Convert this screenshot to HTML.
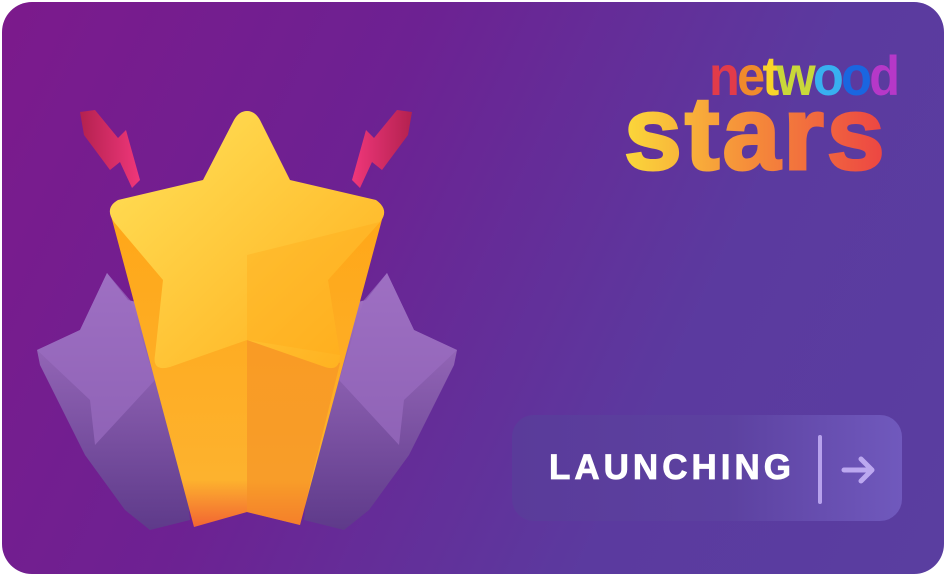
<!DOCTYPE html>
<html><head><meta charset="utf-8"><style>
html,body{margin:0;padding:0;background:#fff;width:946px;height:576px;overflow:hidden}
.card{position:absolute;left:2px;top:2px;width:942px;height:572px;border-radius:30px;overflow:hidden;
background:linear-gradient(115deg,#7c1a8c 0%,#6d2192 35%,#5b3a9f 70%,#5a3ea0 100%)}
.btn{position:absolute;left:510px;top:413px;width:390px;height:106px;border-radius:22px;
background:linear-gradient(90deg,#5a3b9a 0%,#5c41a0 55%,#7059bd 100%)}
.btn .t{position:absolute;left:37px;top:33px;font:bold 35px "Liberation Sans",sans-serif;color:#fff;letter-spacing:4px;-webkit-text-stroke:0.8px #fff}
.btn .d{position:absolute;left:306px;top:20px;width:4px;height:69px;border-radius:2px;background:#b7a2ec}
.logo{position:absolute;font-family:"Liberation Sans",sans-serif;font-weight:bold}
</style></head><body>
<div class="card">
<svg width="942" height="572" style="position:absolute;left:0;top:0">
<defs>
<linearGradient id="bolt" x1="0" x2="1"><stop offset="0" stop-color="#b3214f"/><stop offset="1" stop-color="#f0377a"/></linearGradient>
<linearGradient id="bolt2" x1="1" x2="0"><stop offset="0" stop-color="#b3214f"/><stop offset="1" stop-color="#f0377a"/></linearGradient>
<linearGradient id="body" x1="0" y1="0" x2="0" y2="1"><stop offset="0" stop-color="#ffa718"/><stop offset="0.85" stop-color="#fdb22e"/><stop offset="1" stop-color="#f26532"/></linearGradient>
<linearGradient id="top" x1="0" y1="0" x2="1" y2="1"><stop offset="0" stop-color="#ffe25a"/><stop offset="1" stop-color="#ffae1c"/></linearGradient>
<linearGradient id="pur" x1="0" y1="0" x2="0" y2="1"><stop offset="0" stop-color="#a877c8"/><stop offset="1" stop-color="#5e3a8a"/></linearGradient>
</defs>
<path d="M80 112 L95 110 L118 138 L126 130 L140 180 L132 188 L120 162 L110 170 L84 135 Z" fill="url(#bolt)" transform="translate(-2,-2)"/>
<path d="M412 112 L397 110 L374 138 L366 130 L352 180 L360 188 L372 162 L382 170 L408 135 Z" fill="url(#bolt2)" transform="translate(-2,-2)"/>
<g transform="translate(-2,-2)">
<path d="M107 273 L128 300 L170 310 L190 520 L150 530 L125 510 L85 455 L40 365 L37 350 L80 330 Z" fill="url(#pur)"/>
<path d="M37 350 L80 330 L107 273 L130 300 L155 380 L95 445 L90 400 Z" fill="#9a6cc0" opacity="0.7"/>
<path d="M387 273 L366 300 L324 310 L304 520 L344 530 L369 510 L409 455 L454 365 L457 350 L414 330 Z" fill="url(#pur)"/>
<path d="M457 350 L414 330 L387 273 L364 300 L339 380 L399 445 L404 400 Z" fill="#9a6cc0" opacity="0.7"/>
<path d="M110 212 L384 212 L300 525 L247 512 L194 527 Z" fill="url(#body)"/>
<path d="M247 340 L340 363 L300 525 L247 512 Z" fill="#f58f26" opacity="0.6"/>
<path d="M247 111 Q255 111 260 120 L290 180 L376 200 Q390 210 380 222 L328 280 L340 355 Q340 372 325 367 L247 340 L170 367 Q152 372 155 355 L163 280 L114 222 Q104 208 118 200 L203 180 L234 120 Q239 111 247 111 Z" fill="url(#top)"/>
<path d="M247 111 L247 340 L340 355 L328 280 L380 222 L247 255 Z" fill="#ffa81a" opacity="0.35"/>
</g>
</svg>
<div class="logo" style="left:707px;top:46px;font-size:56px;letter-spacing:-3px;transform:scaleX(0.9);transform-origin:left top;line-height:1">
<span style="color:#e23b4a">n</span><span style="color:#f08a2c">e</span><span style="color:#f8d42a">t</span><span style="color:#c9d83a">w</span><span style="color:#38b0f0">o</span><span style="color:#1a66e0">o</span><span style="color:#b638c8">d</span></div>
<div class="logo" style="left:622px;top:80px;font-size:104px;line-height:1;letter-spacing:3px;-webkit-text-stroke:3px transparent;background:linear-gradient(90deg,#fbd83a,#f5893a 50%,#ec4343);-webkit-background-clip:text;background-clip:text;color:transparent">stars</div>
<div class="btn"><div class="t">LAUNCHING</div><div class="d"></div>
<svg width="40" height="30" style="position:absolute;left:328px;top:40px"><path d="M4 15 H32 M21 4 L32 15 L21 26" stroke="#bca8f0" stroke-width="5" fill="none" stroke-linecap="round" stroke-linejoin="round"/></svg>
</div>
</div>
</body></html>
